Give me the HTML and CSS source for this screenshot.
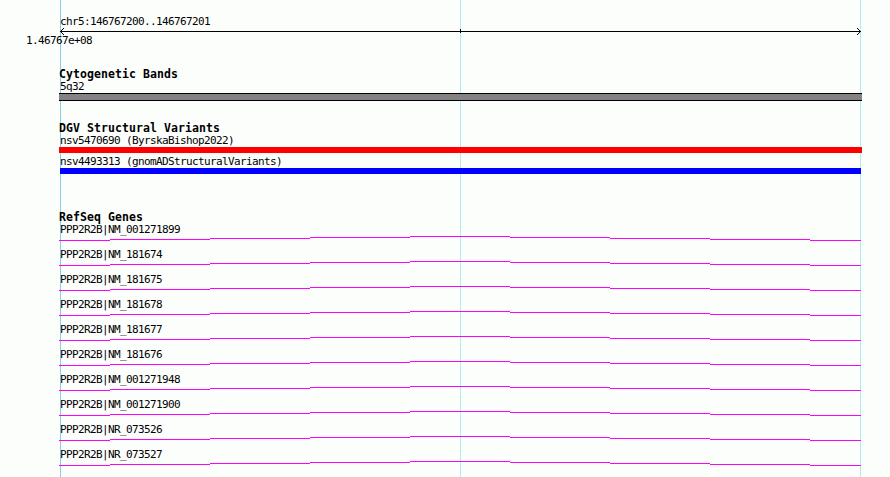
FILE: index.html
```
<!DOCTYPE html>
<html>
<head>
<meta charset="utf-8">
<title>chr5:146767200..146767201</title>
<link rel="stylesheet" href="styles.css">
</head>
<body>

<svg width="0" height="0">
  <defs>
    <path id="intron" d="M0 4h51v1H0zM51 3h100v1H51zM151 2h100v1H151zM251 1h100v1H251zM351 0h100v1H351zM451 1h100v1H451zM551 2h100v1H551zM651 3h100v1H651zM751 4h51v1H751z"/>
  </defs>
</svg>

<div id="panel">

<div class="ruler">
  <div class="label">chr5:146767200..146767201</div>
  <svg class="arrow" width="801" height="7" shape-rendering="crispEdges">
    <path d="M0 3h801v1H0zM1 2h1v3H1zM2 1h1v1H2zM2 5h1v1H2zM3 0h1v1H3zM3 6h1v1H3zM799 2h1v3h-1zM798 1h1v1h-1zM798 5h1v1h-1zM797 0h1v1h-1zM797 6h1v1h-1zM400 1h1v4h-1z"/>
  </svg>
  <div class="label tick">1.46767e+08</div>
</div>

<div class="track cytoband">
  <div class="title">Cytogenetic Bands</div>
  <div class="label">5q32</div>
  <div class="bar grey"></div>
</div>

<div class="track variants">
  <div class="title">DGV Structural Variants</div>
  <div class="label">nsv5470690 (ByrskaBishop2022)</div>
  <div class="bar red"></div>
  <div class="label">nsv4493313 (gnomADStructuralVariants)</div>
  <div class="bar blue"></div>
</div>

<div class="track genes">
  <div class="title">RefSeq Genes</div>
  <div class="gene"><div class="label">PPP2R2B|NM_001271899</div><svg><use href="#intron"/></svg></div>
  <div class="gene"><div class="label">PPP2R2B|NM_181674</div><svg><use href="#intron"/></svg></div>
  <div class="gene"><div class="label">PPP2R2B|NM_181675</div><svg><use href="#intron"/></svg></div>
  <div class="gene"><div class="label">PPP2R2B|NM_181678</div><svg><use href="#intron"/></svg></div>
  <div class="gene"><div class="label">PPP2R2B|NM_181677</div><svg><use href="#intron"/></svg></div>
  <div class="gene"><div class="label">PPP2R2B|NM_181676</div><svg><use href="#intron"/></svg></div>
  <div class="gene"><div class="label">PPP2R2B|NM_001271948</div><svg><use href="#intron"/></svg></div>
  <div class="gene"><div class="label">PPP2R2B|NM_001271900</div><svg><use href="#intron"/></svg></div>
  <div class="gene"><div class="label">PPP2R2B|NR_073526</div><svg><use href="#intron"/></svg></div>
  <div class="gene"><div class="label">PPP2R2B|NR_073527</div><svg><use href="#intron"/></svg></div>
</div>

</div>
</body>
</html>
```
FILE: styles.css
```
body {
  margin:0;
  background:#fcfefc;
  color:#000;
  font-family:"DejaVu Sans Mono", monospace;
  font-size:11px;
  line-height:13px;
}

/* the three gridlines are backgrounds, so the tracks draw over them */
#panel {
  box-sizing:border-box;
  width:890px;
  height:477px;
  padding:15px 0 0 59px;
  overflow:hidden;
  background:
    linear-gradient(#87ceeb, #87ceeb) 60px 0 / 1px 100% no-repeat,
    linear-gradient(#afeeee, #afeeee) 460px 0 / 1px 100% no-repeat,
    linear-gradient(#afeeee, #afeeee) 860px 0 / 1px 100% no-repeat;
}

svg {
  display:block;
}

.label {
  height:13px;
  padding-left:1px;
  letter-spacing:-0.622px;
  white-space:pre;
}

.title {
  height:12px;
  font-size:11.5px;
  font-weight:bold;
  letter-spacing:0.077px;
  white-space:pre;
}

.arrow {
  margin-left:1px;
}

.ruler {
  height:53px;
}

.tick {
  margin-top:-1px;
  margin-left:-34px;
}

.cytoband {
  height:54px;
}

.variants {
  height:89px;
}

.bar {
  box-sizing:border-box;
  width:803px;
  height:6px;
}

.grey {
  height:8px;
  background:#848284;
  border:solid #000;
  border-width:1px 0;
}

.red {
  margin-bottom:2px;
  background:#f00;
}

.blue {
  width:801px;
  margin-left:1px;
  background:#00f;
}

.gene {
  height:25px;
}

.gene svg {
  width:802px;
  height:5px;
  fill:#f0f;
  shape-rendering:crispEdges;
}
```
